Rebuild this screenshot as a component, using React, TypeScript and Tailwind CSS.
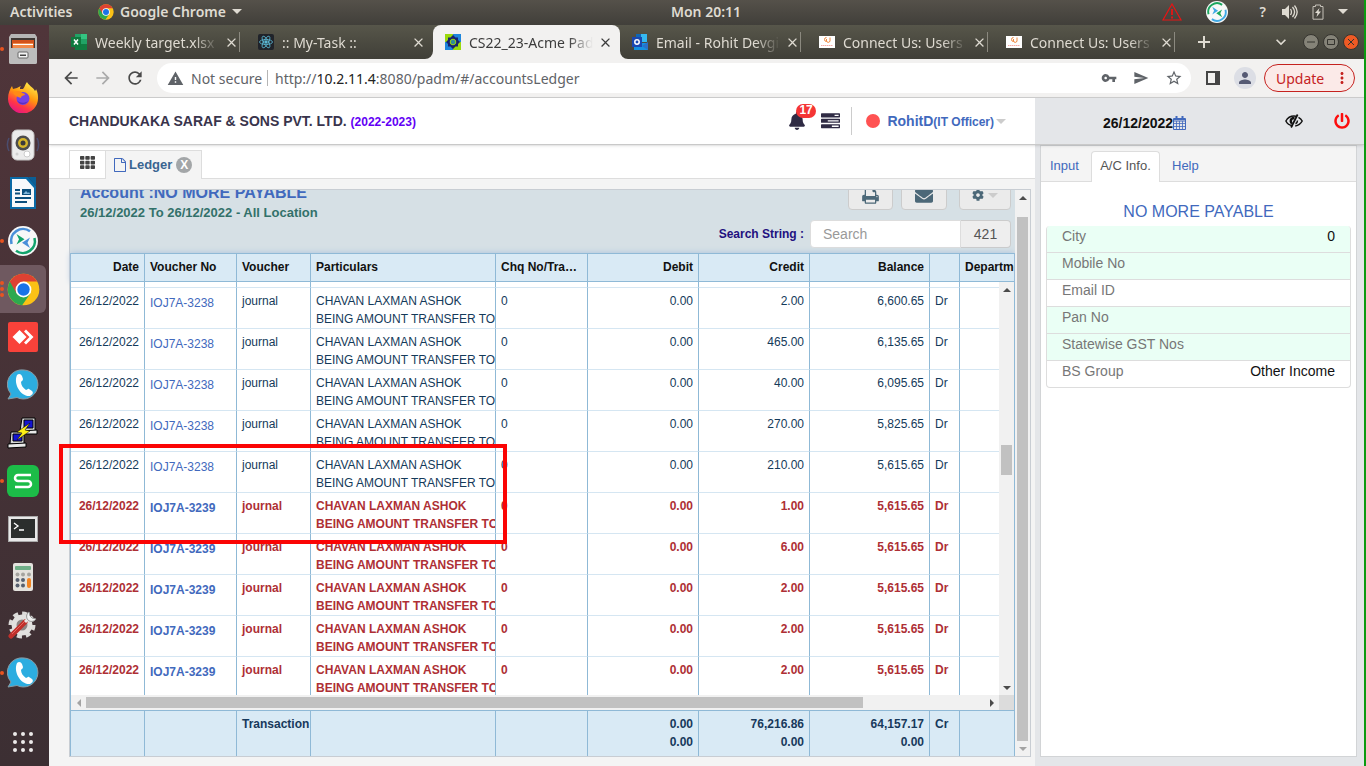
import React from "react";
import { FaBell, FaCog, FaEnvelope, FaPowerOff, FaTh } from "react-icons/fa";
import {
    MdArrowBack,
    MdArrowForward,
    MdClose,
    MdKeyboardArrowDown,
    MdMoreVert,
    MdPerson,
    MdRefresh,
    MdSend,
    MdStarBorder,
    MdVpnKey,
    MdWarning,
} from "react-icons/md";

interface LedgerRow {
    voucherNo: string;
    credit: string;
    balance: string;
    marked?: boolean;
}

const rows: LedgerRow[] = [
    { voucherNo: "IOJ7A-3238", credit: "2.00", balance: "6,600.65" },
    { voucherNo: "IOJ7A-3238", credit: "465.00", balance: "6,135.65" },
    { voucherNo: "IOJ7A-3238", credit: "40.00", balance: "6,095.65" },
    { voucherNo: "IOJ7A-3238", credit: "270.00", balance: "5,825.65" },
    { voucherNo: "IOJ7A-3238", credit: "210.00", balance: "5,615.65" },
    { voucherNo: "IOJ7A-3239", credit: "1.00", balance: "5,615.65", marked: true },
    { voucherNo: "IOJ7A-3239", credit: "6.00", balance: "5,615.65", marked: true },
    { voucherNo: "IOJ7A-3239", credit: "2.00", balance: "5,615.65", marked: true },
    { voucherNo: "IOJ7A-3239", credit: "2.00", balance: "5,615.65", marked: true },
    { voucherNo: "IOJ7A-3239", credit: "2.00", balance: "5,615.65", marked: true },
];

const details = [
    { label: "City", value: "0", tinted: true },
    { label: "Mobile No", value: "", tinted: true },
    { label: "Email ID", value: "", tinted: false },
    { label: "Pan No", value: "", tinted: true },
    { label: "Statewise GST Nos", value: "", tinted: true },
    { label: "BS Group", value: "Other Income", tinted: false },
];

/* ---------- icons ---------- */

function ChromeLogo({ size }: { size: number }) {
    return (
        <svg width={size} height={size} viewBox="0 0 48 48">
            <circle cx="24" cy="24" r="23" fill="#fbc116" />
            <path d="M24 24 4.100 12.500A23 23 0 0 0 22 46.900L34 29.700z" fill="#2da94f" />
            <path d="M4.100 12.500A23 23 0 0 1 44 12.500H24L14 29.700z" fill="#dd4132" />
            <circle cx="24" cy="24" r="11.500" fill="#fff" />
            <circle cx="24" cy="24" r="9" fill="#1a73e8" />
        </svg>
    );
}

function AssistLogo({ size, top, bottom }: { size: number; top: string; bottom: string }) {
    return (
        <svg width={size} height={size} viewBox="0 0 30 30">
            <circle cx="15" cy="15" r="15" fill="#f7f8f8" />
            <path d="M3.500 18A11.900 11.900 0 0 1 22 5.300" fill="none" stroke={top} strokeWidth="2.600" />
            <path d="M26.500 12A11.900 11.900 0 0 1 8 24.700" fill="none" stroke={bottom} strokeWidth="2.600" />
            <path d="m8.500 8 8 5.200-8 5.300 2.500-5.300z" fill={bottom} />
            <path d="m22 11.500-8 5.200 8 5.300-2.500-5.300z" fill={top} />
        </svg>
    );
}

function FilesIcon() {
    return (
        <svg width="30" height="32" viewBox="0 0 30 32">
            <path d="M3 1h24l2 3v25a2 2 0 0 1-2 2H3a2 2 0 0 1-2-2V4z" fill="#b5b5b5" />
            <path d="M3 5h24v10H3z" fill="#3f3834" />
            <path d="M4 7h22v8H4z" fill="#d2521c" />
            <path d="M5 10h20v5H5z" fill="#f08a4b" />
            <path d="M5 11h20v1H5z" fill="#fff" />
            <path d="M1 15h28v14a2 2 0 0 1-2 2H3a2 2 0 0 1-2-2z" fill="#bdbdbd" />
            <rect x="10" y="19" width="10" height="6" rx="1" fill="#f4f4f4" stroke="#666" />
            <path d="M12 21.500h6v1.500h-6z" fill="#444" />
        </svg>
    );
}

function FirefoxIcon() {
    return (
        <svg width="32" height="32" viewBox="0 0 32 32">
            <defs>
                <linearGradient id="fox" x1="0.800" y1="0" x2="0.300" y2="1">
                    <stop offset="0" stopColor="#fff44f" />
                    <stop offset="0.450" stopColor="#ff980e" />
                    <stop offset="0.750" stopColor="#ff3647" />
                    <stop offset="1" stopColor="#e31587" />
                </linearGradient>
            </defs>
            <path
                d="M20 1c1 3 6 5 8 9 1-1 1-2 1-2 2 4 2 7 2 9a15 15 0 0 1-30 1C1 12 3 8 5 5l1 3 4-1c2-1 3-2 4-2-1 1-1 2-1 3h3c2-2 2-5 4-7z"
                fill="url(#fox)"
            />
            <circle cx="16" cy="17.500" r="6.500" fill="#7542e5" />
            <path d="M6 12c4-3 8-2 9 0 2 0 3 1 3 2-3 1-4 1-4 3-3-1-6-2-8-5z" fill="#ff8a16" />
            <path d="M10 19c2 3 7 4 11 1-2 4-9 5-11-1z" fill="#5b2fc0" />
        </svg>
    );
}

function SpeakerIcon() {
    return (
        <svg width="34" height="32" viewBox="0 0 34 32">
            <path d="M3 9c-2 4-2 9 0 13M31 9c2 4 2 9 0 13" fill="none" stroke="#4b4d6e" strokeWidth="1.500" />
            <rect x="6" y="1" width="22" height="30" rx="5" fill="#ececec" stroke="#c4c4c4" />
            <circle cx="17" cy="14" r="7.500" fill="#4d4d4d" />
            <circle cx="17" cy="14" r="5" fill="#d5b52a" />
            <circle cx="17" cy="14" r="2.500" fill="#3b3b3b" />
            <circle cx="21" cy="25" r="3" fill="#fff" stroke="#ccc" />
            <circle cx="11" cy="25" r="1.500" fill="#d0d0d0" />
        </svg>
    );
}

function WriterIcon() {
    return (
        <svg width="26" height="32" viewBox="0 0 26 32">
            <path d="M0 0h18l8 9v23H0z" fill="#0a6aa6" />
            <path d="M2 2h14l8 9v19H2z" fill="#f7f9fb" />
            <path d="M18 0h8v9z" fill="#0a5f97" />
            <path d="M5 12h5v2H5zM5 15.500h5v2H5zM5 20h16v2H5zM5 24h12v2H5z" fill="#0b4f7d" />
            <path d="M12 12h9v6h-9z" fill="#0b4f7d" />
            <path d="m13 17 3-3 2 2 1-1 1 2z" fill="#7fb6da" />
        </svg>
    );
}

function AnydeskIcon() {
    return (
        <svg width="30" height="30" viewBox="0 0 30 30">
            <rect width="30" height="30" rx="2" fill="#f9423a" />
            <path d="m11.500 8 7 7-7 7-7-7z" fill="#fff" />
            <path d="m16 9.500 2-2 7.500 7.500-7.500 7.500-2-2 5.500-5.500z" fill="#fff" />
        </svg>
    );
}

function CallIcon() {
    return (
        <svg width="32" height="32" viewBox="0 0 32 32">
            <path d="M17 1a14.500 14.500 0 1 1-7 27.500L1 30l3-5A14.500 14.500 0 0 1 17 1z" fill="#2cade0" stroke="#8a9aa2" />
            <path
                d="M10 6c2-2 4-1 5 1l1 3c0 2-2 2-2 3 0 3 2 6 5 8 1 0 2-2 3-1l3 2c2 2 0 4-2 5-9 1-17-12-13-21z"
                fill="#fff"
            />
        </svg>
    );
}

function PuttyIcon() {
    return (
        <svg width="32" height="32" viewBox="0 0 32 32" stroke="#000">
            <path d="M15 1h13v13H13z" fill="#d8d8d8" />
            <path d="M17 3h9v8h-9z" fill="#1414d0" />
            <path d="m12 14 18-1v4H12z" fill="#e9e9e9" />
            <path d="M4 15h13v12H3z" fill="#d8d8d8" />
            <path d="M6 17h9v7H6z" fill="#1414d0" />
            <path d="m1 27 18-1v4l-18 1z" fill="#e9e9e9" />
            <path d="m23 6-13 9 5 1-5 7 13-9-5-1z" fill="#ffef16" strokeWidth="0.500" />
        </svg>
    );
}

function SpreadIcon() {
    return (
        <svg width="32" height="32" viewBox="0 0 32 32">
            <rect width="32" height="32" rx="6" fill="#1cbc48" />
            <path d="M24 10H11a3 3 0 0 0 0 6h10a3 3 0 0 1 0 6H8" fill="none" stroke="#fff" strokeWidth="2.500" />
        </svg>
    );
}

function TerminalIcon() {
    return (
        <svg width="30" height="26" viewBox="0 0 30 26">
            <rect x="0.500" y="0.500" width="29" height="25" fill="#e8e8e8" stroke="#aaa" />
            <rect x="3" y="3" width="24" height="19" fill="#2b2e2d" />
            <path d="m6 7 4 3-4 3M11 14h5" fill="none" stroke="#fff" strokeWidth="1.300" />
        </svg>
    );
}

function CalculatorIcon() {
    return (
        <svg width="20" height="28" viewBox="0 0 20 28">
            <rect width="20" height="28" rx="2" fill="#e4e2dd" />
            <rect x="2" y="3" width="16" height="4" rx="1" fill="#6fae87" />
            <g fill="#a5a49f">
                <circle cx="4.500" cy="11.500" r="2" />
                <circle cx="10" cy="11.500" r="2" />
                <circle cx="16" cy="11.500" r="2" />
            </g>
            <g fill="#57606f">
                <circle cx="4.500" cy="17" r="2" />
                <circle cx="10" cy="17" r="2" />
                <circle cx="4.500" cy="22.500" r="2" />
                <circle cx="10" cy="22.500" r="2" />
            </g>
            <rect x="14" y="15" width="4" height="10" rx="2" fill="#f28422" />
        </svg>
    );
}

function SettingsIcon() {
    return (
        <svg width="30" height="30" viewBox="0 0 30 30">
            <circle cx="14" cy="15" r="11.500" fill="none" stroke="#dcdbd9" strokeWidth="4" strokeDasharray="5 4" />
            <circle cx="14" cy="15" r="8" fill="#8c8584" stroke="#e2e1df" strokeWidth="5" />
            <path d="M3 26 17 12" stroke="#c0302b" strokeWidth="5" strokeLinecap="round" />
            <path d="m4 24 12-12" stroke="#e4655f" strokeWidth="1" />
            <path d="m17 12 4-4" stroke="#e8e8e8" strokeWidth="3" />
            <path d="M21 2c-3 2-3 6-1 8s6 2 8-1l-4-1-2-2z" fill="#f2f2f2" stroke="#999" />
        </svg>
    );
}

function PrintIcon() {
    return (
        <svg width="17" height="18" viewBox="0 0 1664 1792" fill="currentColor">
            <path d="M384 1536h896v-256h-896v256zm0-640h896v-384h-160q-40 0-68-28t-28-68v-160h-640v640zm1152 64q0-26-19-45t-45-19-45 19-19 45 19 45 45 19 45-19 19-45zm128 0v416q0 13-9.500 22.500t-22.500 9.500h-224v160q0 40-28 68t-68 28h-960q-40 0-68-28t-28-68v-160h-224q-13 0-22.500-9.500t-9.500-22.500v-416q0-79 56.500-135.500t135.500-56.500h64v-544q0-40 28-68t68-28h672q40 0 88 20t76 48l152 152q28 28 48 76t20 88v256h64q79 0 135.500 56.500t56.500 135.500z" />
        </svg>
    );
}

function TasksIcon() {
    return (
        <svg width="19" height="19" viewBox="0 0 1792 1792" fill="currentColor">
            <path d="M1024 1408h640v-128h-640v128zm-384-512h1024v-128h-1024v128zm640-512h384v-128h-384v128zm512 832v256q0 26-19 45t-45 19h-1664q-26 0-45-19t-19-45v-256q0-26 19-45t45-19h1664q26 0 45 19t19 45zm0-512v256q0 26-19 45t-45 19h-1664q-26 0-45-19t-19-45v-256q0-26 19-45t45-19h1664q26 0 45 19t19 45zm0-512v256q0 26-19 45t-45 19h-1664q-26 0-45-19t-19-45v-256q0-26 19-45t45-19h1664q26 0 45 19t19 45z" />
        </svg>
    );
}

function FileIcon() {
    return (
        <svg width="12" height="14" viewBox="0 0 1536 1792" fill="currentColor">
            <path d="M1468 380q28 28 48 76t20 88v1152q0 40-28 68t-68 28h-1344q-40 0-68-28t-28-68v-1600q0-40 28-68t68-28h896q40 0 88 20t76 48zm-444-244v376h376q-10-29-22-41l-313-313q-12-12-41-22zm384 1528v-1024h-416q-40 0-68-28t-28-68v-416h-768v1536h1280z" />
        </svg>
    );
}

function CalendarIcon() {
    return (
        <svg width="13" height="14" viewBox="0 0 13 14" fill="none" stroke="currentColor">
            <path d="M0.500 2.500h12v11h-12z" />
            <path d="M0.500 3.500h12M0.500 5h12" />
            <path d="M0.500 7.500h12M0.500 10.500h12M3.500 5v8.500M6.500 5v8.500M9.500 5v8.500" strokeWidth="0.800" />
            <path d="M3.500 0v4M9.500 0v4" strokeWidth="2" />
        </svg>
    );
}

function EyeSlashIcon() {
    return (
        <svg width="18" height="14" viewBox="0 0 18 14" fill="none" stroke="#111" strokeWidth="1.500">
            <path d="M7.500 11.800C4.500 11.300 2 9.300.900 7 2.500 4 5.500 2 9 2c.7 0 1.300.1 2 .2" />
            <path d="M9.500 4C7 3.800 5.600 5.500 5.800 7.500c.1.900.6 1.600 1.200 2.100" strokeWidth="2.500" />
            <path d="m12.600.500-6.500 13" strokeWidth="1.800" />
            <path d="M13.500 3.300C15 4.200 16.400 5.500 17.200 7c-1.500 2.800-4 4.500-7 4.900M12.500 6.500c0 1.500-.8 2.700-2 3.200" />
        </svg>
    );
}

function Caret() {
    return (
        <svg width="10" height="5" viewBox="0 0 10 5" fill="currentColor">
            <path d="M0 0h10L5 5z" />
        </svg>
    );
}

type Direction = "up" | "down" | "left" | "right";

const arrowPaths: Record<Direction, string> = {
    up: "M0 6h8L4 2z",
    down: "M0 2h8L4 6z",
    left: "M6 0v8L2 4z",
    right: "M2 0v8l4-4z",
};

function ScrollArrow({ direction, dim }: { direction: Direction; dim?: boolean }) {
    return (
        <span className="flex size-[15px] shrink-0 items-center justify-center">
            <svg width="8" height="8" viewBox="0 0 8 8" fill={dim ? "#a3a3a3" : "#4b4b4b"}>
                <path d={arrowPaths[direction]} />
            </svg>
        </span>
    );
}

/* ---------- desktop ---------- */

function TopBar() {
    return (
        <header className="grid h-[25px] shrink-0 grid-cols-3 items-center bg-linear-to-b from-[#55514a] to-[#413f3a] pb-0.5 text-[14px] font-semibold text-[#dfdbd2]">
            <div className="flex items-center pl-2.5">
                <button className="w-[88px] text-left">Activities</button>
                <button className="flex items-center gap-1.5">
                    <ChromeLogo size={16} />
                    <span>Google Chrome</span>
                    <Caret />
                </button>
            </div>
            <time className="justify-self-center pl-12">Mon 20:11</time>
            <div className="flex items-center justify-end pr-4">
                <svg width="20" height="18" viewBox="0 0 20 18" fill="none" stroke="#e81414" strokeWidth="1.200">
                    <path d="M10 1 19 17H1z" />
                    <path d="M10 6v6M10 13.500v2" strokeWidth="1.800" />
                </svg>
                <span className="ml-6">
                    <AssistLogo size={22} top="#1ba75f" bottom="#3fa9e5" />
                </span>
                <span className="ml-8">?</span>
                <svg className="ml-4" width="16" height="16" viewBox="0 0 16 16" fill="none" stroke="#dfdbd2">
                    <path d="M0 5h3l4-4v14l-4-4H0z" fill="#dfdbd2" stroke="none" />
                    <path d="M8.500 5c1.300 2 1.300 4 0 6M10.500 3c2.500 3 2.500 7 0 10M12.500 1.500c3.300 4 3.300 9 0 13" strokeWidth="1.300" />
                </svg>
                <svg className="ml-3.5" width="12" height="16" viewBox="0 0 12 16" fill="none" stroke="#c5c1b8">
                    <path d="M1 2.500h2.500V1h5v1.500H11v12.700H1z" />
                    <path d="M7.500 4 3 9h2.500L4.500 13 9 7.500H6.500z" fill="#dfdbd2" stroke="none" />
                </svg>
                <span className="ml-3.5">
                    <Caret />
                </span>
            </div>
        </header>
    );
}

const dockItems = [
    { name: "Files", icon: <FilesIcon />, windows: 1 },
    { name: "Firefox", icon: <FirefoxIcon />, windows: 0 },
    { name: "Rhythmbox", icon: <SpeakerIcon />, windows: 0 },
    { name: "Writer", icon: <WriterIcon />, windows: 0 },
    { name: "Assist", icon: <AssistLogo size={30} top="#4a90d9" bottom="#12a36c" />, windows: 1 },
    { name: "Chrome", icon: <ChromeLogo size={33} />, windows: 3 },
    { name: "AnyDesk", icon: <AnydeskIcon />, windows: 0 },
    { name: "Calls", icon: <CallIcon />, windows: 0 },
    { name: "PuTTY", icon: <PuttyIcon />, windows: 0 },
    { name: "Spreadsheets", icon: <SpreadIcon />, windows: 1 },
    { name: "Terminal", icon: <TerminalIcon />, windows: 0 },
    { name: "Calculator", icon: <CalculatorIcon />, windows: 0 },
    { name: "Settings", icon: <SettingsIcon />, windows: 0 },
    { name: "Softphone", icon: <CallIcon />, windows: 1 },
];

function Dock() {
    return (
        <nav className="flex w-[49px] shrink-0 flex-col bg-linear-to-b from-[#50353a] to-[#3c2f33]">
            {dockItems.map((item) => (
                <button
                    key={item.name}
                    aria-label={item.name}
                    className={`relative flex h-12 w-[46px] shrink-0 items-center justify-center rounded-r-md ${
                        item.windows === 3 ? "bg-[#6f5960]" : ""
                    }`}
                >
                    <span className="absolute inset-y-0 left-0 flex flex-col justify-center gap-0.5">
                        {Array.from({ length: item.windows }, (_, i) => (
                            <i key={i} className="size-1 rounded-full bg-[#e95420]" />
                        ))}
                    </span>
                    {item.icon}
                </button>
            ))}
            <button aria-label="Show applications" className="mt-auto flex h-12 w-[46px] items-center justify-center">
                <span className="grid grid-cols-3 gap-1">
                    {Array.from({ length: 9 }, (_, i) => (
                        <i key={i} className="size-1 rounded-full bg-[#eceaea]" />
                    ))}
                </span>
            </button>
        </nav>
    );
}

/* ---------- browser ---------- */

function ExcelFavicon() {
    return (
        <svg width="16" height="16" viewBox="0 0 16 16">
            <path d="M4 0h12v16H4z" fill="#21a366" />
            <path d="M10 0h6v5h-6z" fill="#33c481" />
            <path d="M4 10h12v6H4z" fill="#107c41" />
            <path d="M0 3h10v10H0z" fill="#0f7a3e" />
            <path d="m3 5.500 4 5M7 5.500l-4 5" stroke="#fff" strokeWidth="1.500" />
        </svg>
    );
}

function ReactFavicon() {
    return (
        <svg width="16" height="16" viewBox="0 0 16 16" fill="none" stroke="#5bb8d4" strokeWidth="0.800">
            <rect width="16" height="16" rx="2" fill="#20232a" stroke="none" />
            <ellipse cx="8" cy="8" rx="6.500" ry="2.500" />
            <ellipse cx="8" cy="8" rx="6.500" ry="2.500" transform="rotate(60 8 8)" />
            <ellipse cx="8" cy="8" rx="6.500" ry="2.500" transform="rotate(120 8 8)" />
            <circle cx="8" cy="8" r="1.300" fill="#5bb8d4" />
        </svg>
    );
}

function AcmeFavicon() {
    return (
        <svg width="16" height="16" viewBox="0 0 16 16">
            <path d="M0 0h8v8H0zM8 8h8v8H8z" fill="#9bd90d" />
            <path d="M8 0h8v8H8zM0 8h8v8H0z" fill="#1e86dc" />
            <path d="m8 1 2.500 2.500H13V6l2 2-2 2v2.500h-2.500L8 15l-2.500-2.500H3V10L1 8l2-2V3.500h2.500z" fill="#17236e" />
            <circle cx="8" cy="8" r="2.800" fill="#2d8b9b" stroke="#9bd90d" />
        </svg>
    );
}

function OutlookFavicon() {
    return (
        <svg width="16" height="16" viewBox="0 0 16 16">
            <path d="M4 0h11v8H4z" fill="#35b8f1" />
            <path d="M4 0h5v5H4z" fill="#1066b5" />
            <path d="M2 9h14v7H2z" fill="#1490df" />
            <path d="m16 8-6 4 6 4z" fill="#2a70c8" />
            <path d="M0 3h10v10H0z" fill="#1a47b0" />
            <circle cx="5" cy="8" r="2.200" fill="none" stroke="#fff" strokeWidth="1.500" />
        </svg>
    );
}

function ConnectFavicon() {
    return (
        <svg width="16" height="12" viewBox="0 0 16 12">
            <path d="M0 0h16v12H0z" fill="#fff" />
            <path d="M7.500 1.500a2 2 0 1 0 0 4M7.500 3v2a1.800 1.800 0 0 0 3.500 0V1.500" fill="none" stroke="#f0873c" />
            <path d="M2 9.500h12" stroke="#f3aaa4" strokeDasharray="1.500 .5" />
        </svg>
    );
}

const tabs = [
    { title: "Weekly target.xlsx", icon: <ExcelFavicon /> },
    { title: ":: My-Task ::", icon: <ReactFavicon /> },
    { title: "CS22_23-Acme Padm", icon: <AcmeFavicon />, active: true },
    { title: "Email - Rohit Devgire", icon: <OutlookFavicon /> },
    { title: "Connect Us: Users", icon: <ConnectFavicon /> },
    { title: "Connect Us: Users", icon: <ConnectFavicon /> },
];

function TabStrip() {
    return (
        <div className="flex h-[34px] shrink-0 bg-linear-to-b from-[#57564a] to-[#403f38] pl-2.5 text-[14px] text-[#dfdbd2]">
            {tabs.map((tab, i) => (
                <div
                    key={i}
                    className={`relative flex w-[187px] items-center pr-1.5 pl-3 ${
                        tab.active ? "rounded-t-lg bg-[#f2f1f0] text-[#3c3c3c]" : ""
                    }`}
                >
                    {tab.active && (
                        <>
                            <svg className="absolute bottom-0 -left-2" width="8" height="8" viewBox="0 0 8 8">
                                <path d="M8 0v8H0a8 8 0 0 0 8-8z" fill="#f2f1f0" />
                            </svg>
                            <svg className="absolute -right-2 bottom-0" width="8" height="8" viewBox="0 0 8 8">
                                <path d="M0 0v8h8a8 8 0 0 1-8-8z" fill="#f2f1f0" />
                            </svg>
                        </>
                    )}
                    <span className="flex w-6 shrink-0">{tab.icon}</span>
                    <span className="w-[124px] overflow-hidden mask-r-from-80% mask-r-to-100% whitespace-nowrap">
                        {tab.title}
                    </span>
                    <button aria-label="Close tab" className="ml-[5px]">
                        <MdClose size={15} />
                    </button>
                    {i !== 1 && i !== 2 && <i className="ml-auto h-5 w-px shrink-0 bg-[#8b897f]" />}
                </div>
            ))}
            <button aria-label="New tab" className="ml-4">
                <svg width="14" height="14" viewBox="0 0 14 14" stroke="currentColor" strokeWidth="2">
                    <path d="M7 1v12M1 7h12" />
                </svg>
            </button>
            <div className="ml-auto flex items-center gap-1 pr-[5px]">
                <button aria-label="Search tabs" className="mr-2">
                    <MdKeyboardArrowDown size={20} />
                </button>
                {["Minimize", "Maximize", "Close"].map((name) => (
                    <button
                        key={name}
                        aria-label={name}
                        className={`flex size-4 items-center justify-center rounded-full border border-[#35342f] text-[#35342f] ${
                            name === "Close" ? "bg-[#ee5a24]" : "bg-[#858378]"
                        }`}
                    >
                        <svg width="8" height="8" viewBox="0 0 8 8" fill="none" stroke="currentColor">
                            {name === "Minimize" && <path d="M0 4h8" />}
                            {name === "Maximize" && <path d="M0.500 1.500h7v5h-7z" />}
                            {name === "Close" && <path d="m1 1 6 6M7 1 1 7" />}
                        </svg>
                    </button>
                ))}
            </div>
        </div>
    );
}

function Toolbar() {
    return (
        <div className="flex h-[39px] shrink-0 items-center border-b border-[#cfcfcf] bg-[#f2f1f0] pr-[9px] pl-3 text-[14px] text-[#5f6368]">
            <button aria-label="Back" className="mr-3 text-[#4a4a4a]">
                <MdArrowBack size={20} />
            </button>
            <button aria-label="Forward" className="mr-3 text-[#aaa]">
                <MdArrowForward size={20} />
            </button>
            <button aria-label="Reload" className="mr-3 text-[#4a4a4a]">
                <MdRefresh size={20} />
            </button>
            <div className="flex h-[30px] flex-1 items-center rounded-full bg-white px-2.5">
                <MdWarning size={17} className="text-[#5f6368]" />
                <span className="ml-[7px] w-[69px] whitespace-nowrap">Not secure</span>
                <i className="mx-[7px] h-4 w-px bg-[#b5b5b5]" />
                <a href="#ledger" className="flex-1 whitespace-nowrap">
                    http://<span className="text-[#222]">10.2.11.4</span>:8080/padm/#/accountsLedger
                </a>
                <div className="flex items-center gap-4 text-[#5f6368]">
                    <MdVpnKey size={16} />
                    <MdSend size={16} />
                    <MdStarBorder size={18} className="-mr-0.5" />
                </div>
            </div>
            <svg className="ml-[15px]" width="14" height="14" viewBox="0 0 14 14">
                <path d="M0 0h14v14H0zM2 2v10h7V2z" fill="#454545" fillRule="evenodd" />
            </svg>
            <span className="ml-3.5 flex size-[22px] items-center justify-center rounded-full bg-[#dcdee5] text-[#555a74]">
                <MdPerson size={18} />
            </span>
            <button className="ml-2 flex h-7 w-[91px] items-center justify-between rounded-full border border-[#c5221f] bg-[#fbeae8] pr-[3px] pl-[11px] text-[#c5221f]">
                Update
                <MdMoreVert size={18} />
            </button>
        </div>
    );
}

/* ---------- ledger page ---------- */

function AppHeader() {
    return (
        <header className="relative z-10 flex h-[47px] shrink-0 border-b border-[#c9c9c9] bg-white shadow-sm">
            <div className="flex flex-1 items-center pr-[29px] pl-5">
                <h1 className="flex-1 text-[14px] font-bold text-[#39344c]">
                    CHANDUKAKA SARAF &amp; SONS PVT. LTD. <span className="text-[12px] text-[#6200f5]">(2022-2023)</span>
                </h1>
                <button aria-label="17 notifications" className="relative text-[#2f2b44]">
                    <FaBell size={18} />
                    <span className="absolute -top-2 left-2 h-3.5 rounded-full bg-[#f53535] px-[3px] text-[12px] leading-[13px] font-bold text-white">
                        17
                    </span>
                </button>
                <button aria-label="Tasks" className="ml-[15px] text-[#2f2b44]">
                    <TasksIcon />
                </button>
                <i className="ml-[11px] h-7 w-px bg-[#ccc]" />
                <i className="ml-3.5 size-3.5 rounded-full bg-[#ff5252]" />
                <button className="ml-[7px] flex items-center text-[14px] font-bold text-[#4169bd]">
                    <span>
                        RohitD<span className="text-[12px]">(IT Officer)</span>
                    </span>
                    <span className="ml-0.5 text-[#ccc]">
                        <Caret />
                    </span>
                </button>
            </div>
            <div className="flex w-[329px] shrink-0 items-center bg-[#e4e6e9] pr-3.5">
                <button className="mt-1 ml-[68px] flex items-center text-[14px] font-bold text-[#111]">
                    26/12/2022
                    <span className="text-[#4169bd]">
                        <CalendarIcon />
                    </span>
                </button>
                <button aria-label="Toggle visibility" className="ml-auto">
                    <EyeSlashIcon />
                </button>
                <button aria-label="Log out" className="ml-[31px] text-[#fd0d0d]">
                    <FaPowerOff size={16} />
                </button>
            </div>
        </header>
    );
}

function PageTabs() {
    return (
        <div className="flex h-[34px] shrink-0 items-end border-b border-[#ddd] bg-white pl-5">
            <button
                aria-label="Modules"
                className="flex h-7 w-9 items-center justify-center border-t border-l border-[#ddd] pb-1 text-[#444]"
            >
                <FaTh size={15} />
            </button>
            <div className="-mb-px flex h-[29px] w-[97px] items-center border border-b-0 border-[#ddd] bg-[#f4f4f4] pl-2 text-[13px] font-bold text-[#3a6591]">
                <span className="text-[#4169bd]">
                    <FileIcon />
                </span>
                <span className="ml-[3px]">Ledger</span>
                <button
                    aria-label="Close ledger"
                    className="ml-1 flex size-4 items-center justify-center rounded-full bg-[#a3a6a8] text-[12px] text-white"
                >
                    X
                </button>
            </div>
        </div>
    );
}

function LedgerTools() {
    const button = "flex h-[34px] items-center justify-center rounded-sm border border-[#ccc] bg-[#ebebeb] text-[#4c6878]";

    return (
        <div className="flex h-[63px] shrink-0 items-end justify-between overflow-hidden bg-[#d6e0e5] pr-1 pl-2.5">
            <div className="pb-[30px] font-bold">
                <h2 className="text-[16px] leading-5 text-[#4169bd]">Account :NO MORE PAYABLE</h2>
                <p className="text-[13px] leading-5 text-[#32716a]">26/12/2022 To 26/12/2022 - All Location</p>
            </div>
            <div className="flex flex-col items-end gap-2.5 pb-[5px]">
                <div className="flex">
                    <button aria-label="Print" className={`${button} w-[45px] pt-1.5`}>
                        <PrintIcon />
                    </button>
                    <button aria-label="Mail" className={`${button} ml-2 w-[46px] pt-1.5`}>
                        <FaEnvelope size={18} />
                    </button>
                    <button aria-label="Options" className={`${button} ml-3 w-[52px] gap-1 pt-1`}>
                        <FaCog size={12} />
                        <span className="text-[#ccc]">
                            <Caret />
                        </span>
                    </button>
                </div>
                <div className="flex h-7 items-center">
                    <label htmlFor="search" className="mr-1.5 text-[12px] font-bold text-[#22107f]">
                        Search String :
                    </label>
                    <input
                        id="search"
                        placeholder="Search"
                        className="h-7 w-[151px] rounded-l border border-[#ddd] bg-white px-3 text-[14px] placeholder:text-[#999]"
                    />
                    <span className="flex h-7 w-[50px] items-center justify-center rounded-r border border-l-0 border-[#ccc] bg-[#eee] text-[14px] text-[#555]">
                        421
                    </span>
                </div>
            </div>
        </div>
    );
}

function Columns() {
    return (
        <colgroup>
            <col className="w-[74px]" />
            <col className="w-[92px]" />
            <col className="w-[74px]" />
            <col className="w-[185px]" />
            <col className="w-[92px]" />
            <col className="w-[111px]" />
            <col className="w-[111px]" />
            <col className="w-[120px]" />
            <col className="w-[30px]" />
            <col />
        </colgroup>
    );
}

const line = "border-r border-[#8fb9d6] px-[5px] overflow-hidden whitespace-nowrap";

function LedgerHead() {
    return (
        <table className="w-full table-fixed border-separate border-spacing-0 bg-[#d9eaf5] text-[12px] leading-[18px] text-[#111] shadow-[0_0_6px_#a9c0dd]">
            <Columns />
            <thead>
                <tr className="h-[29px] text-left [&>th]:border-y [&>th]:pb-0.5">
                    <th className={`${line} text-right`}>Date</th>
                    <th className={line}>Voucher No</th>
                    <th className={line}>Voucher</th>
                    <th className={line}>Particulars</th>
                    <th className={`${line} text-ellipsis`}>Chq No/Transaction</th>
                    <th className={`${line} text-right`}>Debit</th>
                    <th className={`${line} text-right`}>Credit</th>
                    <th className={`${line} text-right`}>Balance</th>
                    <th className={line} />
                    <th className="overflow-hidden border-[#8fb9d6] pl-[5px]">Department</th>
                </tr>
            </thead>
        </table>
    );
}

function LedgerBody() {
    const cell = `${line} border-b border-b-[#d5e6f2] pt-1`;

    return (
        <table className="w-full table-fixed border-separate border-spacing-0 bg-white text-[12px] leading-[18px]">
            <Columns />
            <tbody>
                <tr className="h-1.5">
                    {Array.from({ length: 9 }, (_, i) => (
                        <td key={i} className="border-r border-b border-[#8fb9d6] border-b-[#d5e6f2]" />
                    ))}
                    <td className="border-b border-[#d5e6f2]" />
                </tr>
                {rows.map((row, i) => (
                    <tr
                        key={i}
                        className={`h-[41px] align-top ${row.marked ? "font-bold text-[#ae2f35]" : "text-[#143a5a]"}`}
                    >
                        <td className={`${cell} text-right`}>26/12/2022</td>
                        <td className={`${line} border-b border-b-[#d5e6f2] pt-1.5`}>
                            <a href="#voucher" className="text-[#4169bd]">
                                {row.voucherNo}
                            </a>
                        </td>
                        <td className={cell}>journal</td>
                        <td className={cell}>
                            CHAVAN LAXMAN ASHOK
                            <br />
                            BEING AMOUNT TRANSFER TO
                        </td>
                        <td className={cell}>0</td>
                        <td className={`${cell} text-right`}>0.00</td>
                        <td className={`${cell} text-right`}>{row.credit}</td>
                        <td className={`${cell} text-right`}>{row.balance}</td>
                        <td className={cell}>Dr</td>
                        <td className="border-b border-[#d5e6f2]" />
                    </tr>
                ))}
            </tbody>
        </table>
    );
}

function LedgerFoot() {
    const cell = `${line} pt-1`;

    return (
        <table className="h-[46px] w-full shrink-0 table-fixed border-separate border-spacing-0 border-t border-[#8fb9d6] bg-[#d9eaf5] text-[12px] leading-[18px] font-bold text-[#17395c]">
            <Columns />
            <tbody>
                <tr className="align-top">
                    <td className={cell} />
                    <td className={cell} />
                    <td className={cell}>Transaction</td>
                    <td className={cell} />
                    <td className={cell} />
                    <td className={`${cell} text-right`}>
                        0.00
                        <br />
                        0.00
                    </td>
                    <td className={`${cell} text-right`}>
                        76,216.86
                        <br />
                        0.00
                    </td>
                    <td className={`${cell} text-right`}>
                        64,157.17
                        <br />
                        0.00
                    </td>
                    <td className={cell}>Cr</td>
                    <td />
                </tr>
            </tbody>
        </table>
    );
}

function Ledger() {
    return (
        <section className="mt-2.5 mr-1 mb-[9px] ml-5 flex min-h-0 flex-1 border border-[#c8cdd3] bg-[#f1f1f1]">
            <div className="flex min-w-0 flex-1 flex-col">
                <LedgerTools />
                <div className="flex min-h-0 flex-1 flex-col border-x border-[#8fb9d6]">
                    <LedgerHead />
                    <div className="flex min-h-0 flex-1">
                        <div className="min-w-0 flex-1 overflow-hidden">
                            <LedgerBody />
                        </div>
                        <div className="flex w-[15px] shrink-0 flex-col items-center bg-[#f1f1f1]">
                            <ScrollArrow direction="up" />
                            <div className="flex flex-1 flex-col">
                                <i className="grow-42" />
                                <i className="h-[30px] w-[11px] bg-[#c1c1c1]" />
                                <i className="grow-58" />
                            </div>
                            <ScrollArrow direction="down" />
                        </div>
                    </div>
                    <div className="flex h-[15px] shrink-0 items-center bg-[#f1f1f1]">
                        <ScrollArrow direction="left" dim />
                        <div className="flex flex-1">
                            <i className="h-[11px] grow-777 bg-[#c1c1c1]" />
                            <i className="grow-121" />
                        </div>
                        <ScrollArrow direction="right" />
                        <i className="size-[15px] bg-[#dcdcdc]" />
                    </div>
                    <LedgerFoot />
                </div>
            </div>
            <div className="flex w-[15px] shrink-0 flex-col items-center bg-[#f1f1f1]">
                <ScrollArrow direction="up" />
                <i className="mt-3 w-[11px] flex-1 bg-[#c1c1c1]" />
                <ScrollArrow direction="down" dim />
            </div>
        </section>
    );
}

function AccountInfo() {
    return (
        <aside className="w-[329px] shrink-0 bg-[#e4e6e9] pr-[7px] pb-[9px] pl-[5px]">
            <div className="h-full border border-[#d2d4d6] bg-white">
                <div className="flex h-9 items-end border-b border-[#ddd] bg-[#f4f4f4] text-[13px] text-[#4169bd]">
                    <button className="h-[30px] w-[50px] pl-[9px] text-left">Input</button>
                    <button className="-mb-px h-[31px] w-[69px] rounded-t border border-b-0 border-[#ddd] bg-white pb-0.5 text-[#555]">
                        A/C Info.
                    </button>
                    <button className="h-[30px] px-3">Help</button>
                </div>
                <h3 className="mt-[18px] text-center text-[16px] leading-6 text-[#4169bd]">NO MORE PAYABLE</h3>
                <dl className="mx-[5px] mt-0.5 overflow-hidden rounded border border-t-0 border-[#ddd] text-[14px] leading-5">
                    {details.map((item) => (
                        <div
                            key={item.label}
                            className={`flex h-[27px] justify-between border-b border-[#ddd] px-[15px] last:h-[26px] last:border-b-0 ${
                                item.tinted ? "bg-[#eafff5]" : ""
                            }`}
                        >
                            <dt className="text-[#777]">{item.label}</dt>
                            <dd className="text-[#111]">{item.value}</dd>
                        </div>
                    ))}
                </dl>
            </div>
        </aside>
    );
}

export default function App() {
    return (
        <div className="relative flex h-screen flex-col overflow-hidden border-r-2 border-[#0c9a10] font-['Noto_Sans',sans-serif]">
            <TopBar />
            <div className="flex min-h-0 flex-1">
                <Dock />
                <div className="flex min-w-0 flex-1 flex-col">
                    <TabStrip />
                    <Toolbar />
                    <div className="flex min-h-0 flex-1 flex-col bg-[#f4f4f4] font-['Liberation_Sans',Arial,sans-serif]">
                        <AppHeader />
                        <div className="flex min-h-0 flex-1">
                            <main className="flex min-w-0 flex-1 flex-col">
                                <PageTabs />
                                <Ledger />
                            </main>
                            <AccountInfo />
                        </div>
                    </div>
                </div>
            </div>
            {/* highlight drawn over the rows where the voucher changes */}
            <div className="pointer-events-none absolute top-[444px] left-[59px] z-20 h-[100px] w-[448px] border-4 border-[#fb0404]" />
        </div>
    );
}
